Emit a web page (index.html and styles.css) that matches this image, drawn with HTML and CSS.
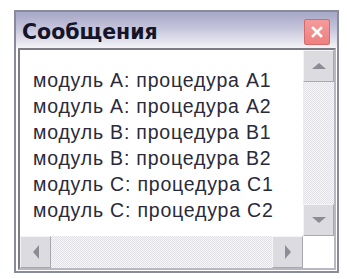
FILE: index.html
```html
<!DOCTYPE html>
<html>
<head>
<meta charset="utf-8">
<link rel="stylesheet" href="styles.css">
</head>
<body>
<div class="window">
  <div class="titlebar">
    <span class="title">Сообщения</span>
    <span class="close"><svg width="12" height="12" viewBox="0 0 12 12"><path d="M2 2L10 10M10 2L2 10" stroke="#fff" stroke-width="2.6" stroke-linecap="square"/></svg></span>
  </div>
  <div class="listbox">
    <div class="content">
      <div class="line">модуль A: процедура A1</div>
      <div class="line">модуль A: процедура A2</div>
      <div class="line">модуль B: процедура B1</div>
      <div class="line">модуль B: процедура B2</div>
      <div class="line">модуль C: процедура C1</div>
      <div class="line">модуль C: процедура C2</div>
    </div>
    <div class="vscroll">
      <div class="btn"><span class="tri up"></span></div>
      <div class="track"></div>
      <div class="btn"><span class="tri down"></span></div>
    </div>
    <div class="hscroll">
      <div class="btn"><span class="tri left"></span></div>
      <div class="track"></div>
      <div class="btn"><span class="tri right"></span></div>
    </div>
    <div class="corner"></div>
  </div>
</div>
</body>
</html>
```
FILE: styles.css
```css
html, body { margin: 0; padding: 0; background: #fff; }
body { width: 347px; height: 279px; overflow: hidden; }
.window {
  margin: 10px 0 0 14px;
  width: 321px;
  height: 259px;
  border: 2px solid #8a8a9e;
  background: #fff;
  display: flex;
  flex-direction: column;
}
.titlebar {
  height: 36px;
  flex: none;
  background: linear-gradient(#a6a6c6 0%, #c4c4da 45%, #f4f4f8 100%);
  display: flex;
  align-items: center;
  justify-content: space-between;
  padding: 0 7px 0 6px;
}
.title {
  font-family: "DejaVu Sans", sans-serif;
  font-weight: bold;
  font-size: 20.5px;
  color: #15152a;
  margin-top: 4px;
}
.close {
  width: 24px;
  height: 24px;
  margin-top: 4px;
  border: 1px solid #d46a6a;
  border-radius: 2px;
  background: linear-gradient(#f49a9a, #ee8080);
  display: flex;
  align-items: center;
  justify-content: center;
}
.listbox {
  margin-left: 2px;
  width: 314px;
  height: 218px;
  border: 2px solid;
  border-color: #7c7c84 #b8b8c0 #b8b8c0 #7c7c84;
  display: grid;
  grid-template-columns: 1fr 31px;
  grid-template-rows: 1fr 32px;
  background: #fff;
}
.content {
  padding: 17px 0 0 13px;
  font-family: "Liberation Sans", Arial, sans-serif;
  font-size: 19.5px;
  letter-spacing: 0.8px;
  line-height: 26px;
  color: #2a2a3a;
  overflow: hidden;
  white-space: nowrap;
}
.vscroll {
  display: flex;
  flex-direction: column;
}
.hscroll {
  display: flex;
}
.track {
  flex: 1;
  background: repeating-conic-gradient(#e2e2e6 0 25%, #f6f6f8 0 50%) 0 0 / 2px 2px;
}
.btn {
  flex: none;
  box-sizing: border-box;
  background: #dcdce0;
  border: 1px solid;
  border-color: #f4f4f6 #a8a8b0 #a8a8b0 #f4f4f6;
  display: flex;
  align-items: center;
  justify-content: center;
}
.vscroll .btn { height: 32px; }
.hscroll .btn { width: 31px; }
.tri { width: 0; height: 0; border-style: solid; }
.tri.up { border-width: 0 7px 6px 7px; border-color: transparent transparent #8c8c94 transparent; }
.tri.down { border-width: 6px 7px 0 7px; border-color: #8c8c94 transparent transparent transparent; }
.tri.left { border-width: 7px 6px 7px 0; border-color: transparent #8c8c94 transparent transparent; }
.tri.right { border-width: 7px 0 7px 6px; border-color: transparent transparent transparent #8c8c94; }
.corner { background: #fff; }
```
